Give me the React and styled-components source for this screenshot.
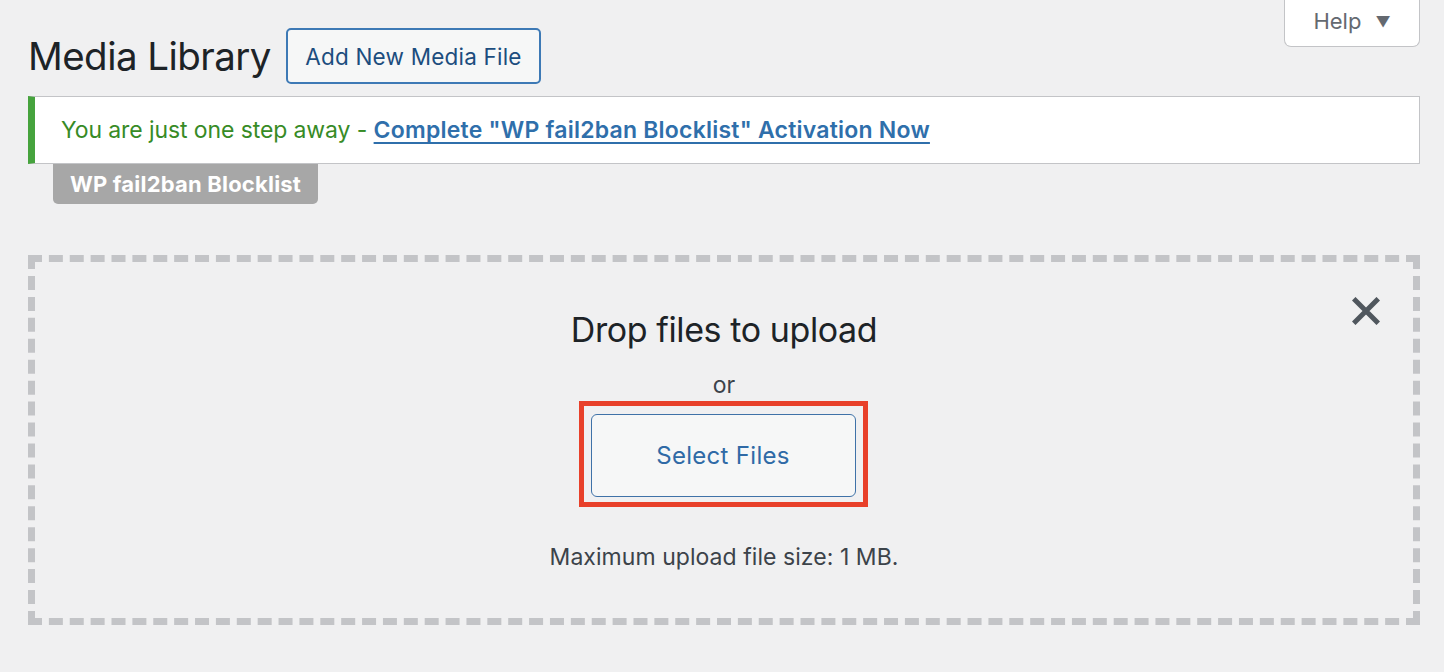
import React from "react";
import styled, { createGlobalStyle } from "styled-components";

const Global = createGlobalStyle`
  html, body { margin: 0; padding: 0; background: #f0f0f1; }
  body {
    font-family: Inter, "Noto Sans", "Liberation Sans", sans-serif;
    color: #3c434a;
    -webkit-font-smoothing: antialiased;
  }
  * { box-sizing: border-box; }
`;

const Page = styled.div`
  padding: 0 24px 0 28px;
  min-height: 672px;
`;

const TopRow = styled.div`
  display: flex;
  justify-content: space-between;
  align-items: flex-start;
`;

const TitleGroup = styled.div`
  display: flex;
  align-items: center;
  gap: 15px;
  margin-top: 28px;
`;

const Title = styled.h1`
  margin: 0;
  font-size: 38.5px;
  line-height: 56px;
  font-weight: 400;
  color: #1d2327;
  letter-spacing: -0.55px;
`;

const OutlineButton = styled.button`
  font-family: inherit;
  height: ${(p) => p.$h || 56}px;
  width: ${(p) => p.$w}px;
  padding: 0;
  border: ${(p) => p.$bw || 2}px solid ${(p) => p.$border || "#3d79b5"};
  border-radius: ${(p) => p.$r || 5}px;
  background: #f6f7f7;
  color: ${(p) => p.$color || "#1c4d7e"};
  font-size: ${(p) => p.$fs || 22.5}px;
  font-weight: 400;
  cursor: pointer;
  letter-spacing: ${(p) => p.$ls || 0.2}px;
`;

const HelpTab = styled.button`
  font-family: inherit;
  width: 136px;
  height: 47px;
  display: flex;
  align-items: center;
  justify-content: center;
  gap: 14px;
  padding: 0 0 4px;
  background: #fff;
  border: 1px solid #c3c4c7;
  border-top: none;
  border-radius: 0 0 7px 7px;
  color: #646970;
  font-size: 22px;
  cursor: pointer;
`;

const Caret = styled.span`
  font-size: 15px;
  line-height: 1;
  color: #646970;
`;

const Notice = styled.div`
  margin-top: 12px;
  height: 68px;
  display: flex;
  align-items: center;
  background: #fff;
  border: 1px solid #c3c4c7;
  border-left: 7px solid #46a33d;
  padding: 0 26px;
  font-size: 23px;
`;

const NoticeText = styled.span`
  color: #378b26;
  letter-spacing: -0.1px;
`;

const NoticeLink = styled.a`
  color: #2f6fab;
  font-weight: 600;
  letter-spacing: 0.22px;
  text-decoration: underline;
  text-decoration-skip-ink: none;
  text-underline-offset: 4px;
  text-decoration-thickness: 2px;
  cursor: pointer;
`;

const Badge = styled.div`
  margin-left: 25px;
  width: 265px;
  height: 40px;
  display: flex;
  align-items: center;
  justify-content: center;
  background: #a7a7a7;
  color: #fff;
  font-size: 22px;
  font-weight: 700;
  letter-spacing: 0.2px;
  border-radius: 0 0 5px 5px;
`;

const DropZone = styled.div`
  position: relative;
  margin-top: 51px;
  height: 370px;
  border: 7px dashed #c3c4c7;
  display: flex;
  flex-direction: column;
  align-items: center;
`;

const CloseButton = styled.button`
  position: absolute;
  top: 35px;
  right: 33px;
  width: 28px;
  height: 28px;
  padding: 0;
  border: none;
  background: none;
  cursor: pointer;
  display: flex;
`;

const DropTitle = styled.h2`
  margin: 46px 0 0;
  font-size: 34px;
  line-height: 44px;
  font-weight: 400;
  color: #1d2327;
  letter-spacing: -0.4px;
`;

const SmallText = styled.p`
  margin: ${(p) => p.$mt}px 0 0;
  font-size: 23px;
  line-height: 30px;
  color: #3c434a;
  letter-spacing: 0.05px;
`;

const Highlight = styled.div`
  margin-top: 1px;
  border: 5px solid #e8402a;
  padding: 8px 7px 5px 7px;
  display: flex;
  transform: translateX(-1px);
`;

function CloseIcon() {
  return (
    <svg width="28" height="28" viewBox="0 0 28 28">
      <path d="M3.5 3.5 L24.5 24.5 M24.5 3.5 L3.5 24.5" stroke="#50575e" strokeWidth="5" strokeLinecap="square" fill="none" />
    </svg>
  );
}

export default function App() {
  return (
    <>
      <Global />
      <Page>
        <TopRow>
          <TitleGroup>
            <Title>Media Library</Title>
            <OutlineButton $w={255}>Add New Media File</OutlineButton>
          </TitleGroup>
          <HelpTab>
            Help <Caret>▼</Caret>
          </HelpTab>
        </TopRow>
        <Notice>
          <NoticeText>You are just one step away -&nbsp;</NoticeText>
          <NoticeLink>Complete "WP fail2ban Blocklist" Activation Now</NoticeLink>
        </Notice>
        <Badge>WP fail2ban Blocklist</Badge>
        <DropZone>
          <CloseButton aria-label="Close uploader">
            <CloseIcon />
          </CloseButton>
          <DropTitle>Drop files to upload</DropTitle>
          <SmallText $mt={18}>or</SmallText>
          <Highlight>
            <OutlineButton $w={265} $h={83} $bw={1} $border="#3f72a8" $color="#2f6aa6" $fs={24} $r={6} $ls={0.3}>
              Select Files
            </OutlineButton>
          </Highlight>
          <SmallText $mt={35}>Maximum upload file size: 1 MB.</SmallText>
        </DropZone>
      </Page>
    </>
  );
}
